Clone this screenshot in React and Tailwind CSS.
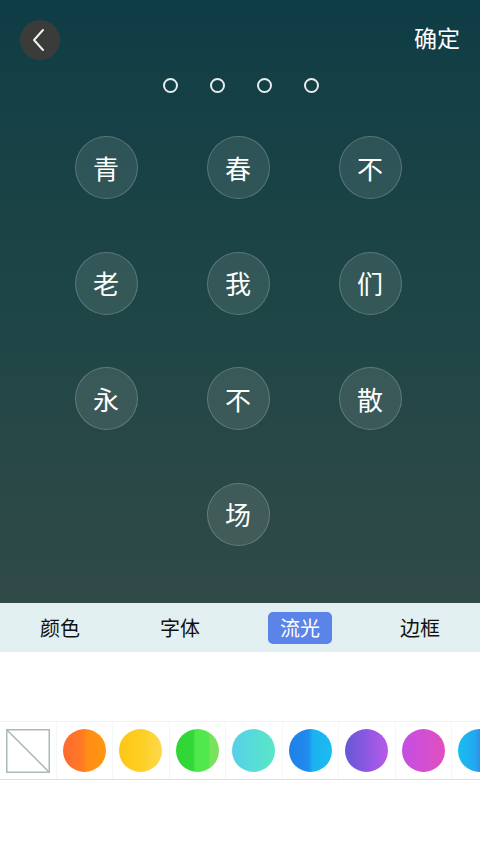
import React from "react";

const font = { fontFamily: '"Noto Sans CJK SC", "Noto Sans", sans-serif' };

const chars = ["青", "春", "不", "老", "我", "们", "永", "不", "散"];

const swatches = [
  "linear-gradient(to right, #fe6a30 0%, #ff7a24 45%, #ff8c16 55%, #ff9810 100%)",
  "linear-gradient(to right, #fdc616 0%, #fdcf22 50%, #fdd84c 100%)",
  "linear-gradient(to right, #2ed635 0%, #32d838 40%, #4fe84a 45%, #52e84c 75%, #7ae25c 80%, #7ce05e 100%)",
  "linear-gradient(to right, #56cfe9 0%, #57dcd8 50%, #59e6c6 100%)",
  "linear-gradient(to right, #1f7fea 0%, #1f8cec 45%, #1ab2f0 55%, #1cbcf0 100%)",
  "linear-gradient(to right, #6558d6 0%, #8c58e2 50%, #b85ae8 100%)",
  "linear-gradient(to right, #c44ee2 0%, #d24fd2 50%, #e150bd 100%)",
  "linear-gradient(to right, #18bdf2 0%, #22a8ee 40%, #3a84e6 55%, #5a62dc 100%)",
];

export default function App() {
  return (
    <div className="w-[480px] h-[853px] bg-white overflow-hidden" style={font}>
      <div className="h-[603px] bg-gradient-to-b from-[#0f3d45] via-[#1e4546] to-[#304a47] flex flex-col">
        <div className="flex items-center justify-between pl-[20px] pr-[20px] pt-[20px] h-[60px]">
          <div className="w-[40px] h-[40px] rounded-full bg-[#3a3c3a] flex items-center justify-center">
            <svg width="14" height="24" viewBox="0 0 14 24" className="-ml-[3px]">
              <path d="M11 2 L2 12 L11 22" fill="none" stroke="#f2f2f2" strokeWidth="2" strokeLinecap="round" strokeLinejoin="round" />
            </svg>
          </div>
          <div className="text-white text-[23px] leading-none -mt-[6px]">确定</div>
        </div>
        <div className="mt-[18px] h-[16px] flex justify-center gap-[32px] pl-[1px]">
          {[0, 1, 2, 3].map((i) => (
            <div key={i} className="w-[15px] h-[15px] rounded-full border-2 border-[#e6ecec]" />
          ))}
        </div>
        <div className="mt-[16px] ml-[40px] grid grid-cols-[repeat(3,132px)] auto-rows-[115.5px]">
          {chars.map((c, i) => (
            <div key={i} className="flex items-center justify-center">
              <div className="w-[63px] h-[63px] rounded-full bg-white/10 border border-white/20 flex items-center justify-center text-white text-[26px] leading-none">
                {c}
              </div>
            </div>
          ))}
          <div className="col-start-2 flex items-center justify-center">
            <div className="w-[63px] h-[63px] rounded-full bg-white/10 border border-white/20 flex items-center justify-center text-white text-[26px] leading-none">
              场
            </div>
          </div>
        </div>
      </div>

      <div className="h-[49px] bg-[#e3f0f2] flex items-center">
        {["颜色", "字体", "流光", "边框"].map((t, i) => (
          <div key={t} className="flex-1 flex items-center justify-center">
            {i === 2 ? (
              <div className="w-[64px] h-[32px] rounded-[5px] bg-[#5b84e8] text-white text-[20px] leading-none flex items-center justify-center">
                {t}
              </div>
            ) : (
              <div className="text-[20px] leading-none text-[#111]">{t}</div>
            )}
          </div>
        ))}
      </div>

      <div className="h-[69px] bg-white" />

      <div className="border-t border-[#eef3f3] border-b border-b-[#d9e0e0] h-[59px] flex overflow-hidden">
        <div className="w-[56.5px] shrink-0 flex items-center justify-center border-r border-[#f4f7f7]">
          <svg width="44" height="44" viewBox="0 0 44 44">
            <rect x="0.75" y="0.75" width="42.5" height="42.5" fill="#fff" stroke="#a9baba" strokeWidth="1.5" />
            <line x1="1" y1="1" x2="43" y2="43" stroke="#a9baba" strokeWidth="1.5" />
          </svg>
        </div>
        {swatches.map((g, i) => (
          <div key={i} className="w-[56.5px] shrink-0 flex items-center justify-center border-r border-[#f4f7f7]">
            <div className="w-[43px] h-[43px] rounded-full" style={{ background: g }} />
          </div>
        ))}
      </div>
    </div>
  );
}
